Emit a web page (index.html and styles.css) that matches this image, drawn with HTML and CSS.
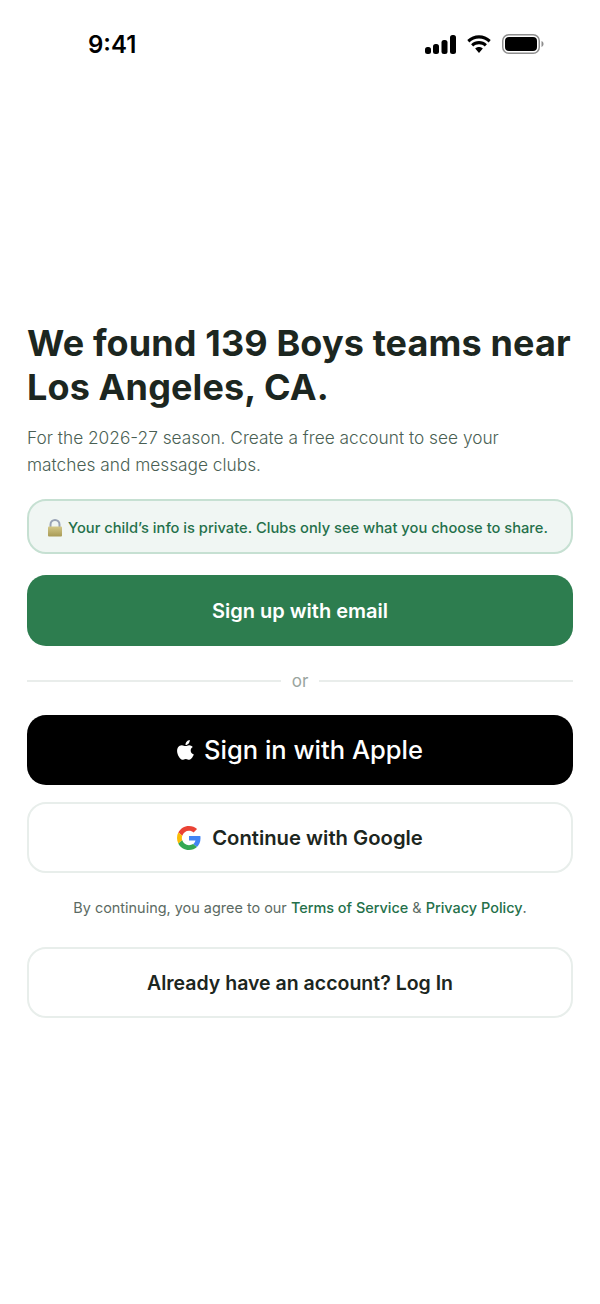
FILE: index.html
```html
<!DOCTYPE html>
<html lang="en">
<head>
<meta charset="utf-8">
<title>Sign up</title>
<link rel="stylesheet" href="styles.css">
</head>
<body>
<div class="status">
  <span class="time">9:41</span>
  <span class="status-icons">
    <svg width="31" height="19" viewBox="0 0 31 19" class="signal"><rect x="0" y="12" width="6" height="7" rx="2.5"/><rect x="8" y="9" width="6" height="10" rx="2.5"/><rect x="16.500" y="5" width="6" height="14" rx="2.5"/><rect x="25" y="0" width="6" height="19" rx="2.500"/></svg>
    <svg width="26" height="19" viewBox="0 0 26 19" class="wifi"><path d="M13 3.500c3.800 0 7 1.400 9.700 3.900l2-2.300C21.400 2 17.400 0.300 13 0.300S4.600 2 1.300 5.100l2 2.300C6 4.900 9.200 3.500 13 3.500z"/><path d="M13 9.300c2.300 0 4.200.8 5.800 2.200l2.100-2.300C18.700 7.200 16 6.100 13 6.100S7.300 7.200 5.100 9.200l2.100 2.300c1.600-1.400 3.500-2.200 5.800-2.200z"/><path d="M13 12c-1.500 0-2.700.5-3.800 1.500L13 18l3.800-4.500c-1.100-1-2.300-1.500-3.800-1.500z"/></svg>
    <svg width="42" height="20" viewBox="0 0 42 20" class="battery"><rect x="0.750" y="0.750" width="36.500" height="18.500" rx="6" fill="none" stroke="#8e8e8e" stroke-width="1.500"/><rect x="3" y="3" width="32" height="14" rx="4"/><path d="M39.500 7v6c1.200-.4 2-1.600 2-3s-.8-2.600-2-3z" fill="#8e8e8e"/></svg>
  </span>
</div>
<main class="content">
  <h1 class="title">We found 139 Boys teams near Los Angeles, CA.</h1>
  <p class="lead">For the 2026-27 season. Create a free account to see your matches and message clubs.</p>
  <div class="notice">
    <svg class="lock" width="16" height="18" viewBox="0 0 16 18"><defs><linearGradient id="lockbody" x1="0" y1="0" x2="0" y2="1"><stop offset="0" stop-color="#d3c888"/><stop offset="1" stop-color="#a89a55"/></linearGradient></defs><path d="M3.500 8V5.500a4.500 4.500 0 0 1 9 0V8" fill="none" stroke="#98a3b5" stroke-width="2"/><rect x="1" y="7.500" width="14" height="10" rx="1" fill="url(#lockbody)"/></svg>
    <span>Your child’s info is private. Clubs only see what you choose to share.</span>
  </div>
  <button class="btn btn-primary">Sign up with email</button>
  <div class="divider"><span class="rule"></span><span class="or">or</span><span class="rule"></span></div>
  <button class="btn btn-apple">
    <svg width="18" height="22" viewBox="0 0 20 24" fill="#fff"><path d="M14.200 1c.1 1.400-.4 2.700-1.200 3.700-.9 1-2.200 1.800-3.500 1.700-.2-1.300.4-2.700 1.200-3.600C11.500 1.800 13 1.100 14.200 1zM18.700 17c-.5 1.200-.8 1.700-1.400 2.700-.9 1.400-2.200 3.100-3.800 3.100-1.400 0-1.800-.9-3.700-.9s-2.400.9-3.800.9c-1.600 0-2.800-1.600-3.700-3C-.2 16-.5 11.600 1 9.300 2.100 7.600 3.800 6.700 5.400 6.700c1.700 0 2.700.9 4.100.9 1.300 0 2.100-.9 4-.9 1.400 0 2.900.8 4 2.100-3.500 1.900-2.900 6.900 1.200 8.200z"/></svg>
    <span>Sign in with Apple</span>
  </button>
  <button class="btn btn-outline btn-google">
    <svg width="24" height="24" viewBox="0 0 48 48"><path fill="#EA4335" d="M24 9.500c3.500 0 6.700 1.200 9.200 3.600l6.900-6.900C35.900 2.400 30.500 0 24 0 14.600 0 6.500 5.400 2.600 13.200l8 6.200C12.400 13.700 17.700 9.500 24 9.500z"/><path fill="#4285F4" d="M47 24.500c0-1.600-.1-3.100-.4-4.500H24v9h12.900c-.6 3-2.200 5.500-4.700 7.200l7.700 6c4.500-4.200 7.100-10.300 7.100-17.700z"/><path fill="#FBBC05" d="M10.500 28.600c-.5-1.400-.8-3-.8-4.600s.3-3.200.8-4.600l-8-6.200C.9 16.500 0 20.100 0 24s.9 7.500 2.600 10.800l7.900-6.200z"/><path fill="#34A853" d="M24 48c6.500 0 11.900-2.100 15.900-5.800l-7.700-6c-2.200 1.500-5 2.300-8.200 2.300-6.300 0-11.600-4.200-13.500-9.900l-7.900 6.200C6.500 42.600 14.600 48 24 48z"/></svg>
    <span>Continue with Google</span>
  </button>
  <p class="terms">By continuing, you agree to our <a class="link" href="#">Terms of Service</a> &amp; <a class="link" href="#">Privacy Policy</a>.</p>
  <button class="btn btn-outline btn-login">Already have an account? Log In</button>
</main>
</body>
</html>
```
FILE: styles.css
```css
* { box-sizing: border-box; }
html, body { margin: 0; height: 100%; }
body {
  background: #fff;
  font-family: Inter, "Noto Sans", sans-serif;
  color: #1c2620;
  overflow: hidden;
}
.status {
  height: 88px;
  padding: 0 56px 0 88px;
  display: flex;
  justify-content: space-between;
  align-items: center;
}
.time { font-size: 24px; font-weight: 600; color: #000; }
.status-icons { display: flex; align-items: center; gap: 10px; }
.content {
  padding: 233px 27px 0;
  display: flex;
  flex-direction: column;
}
.title {
  margin: 0;
  font-size: 36px;
  line-height: 44px;
  font-weight: 700;
  letter-spacing: 0.12px;
}
.lead {
  margin: 15px 0 0;
  max-width: 500px;
  font-size: 17.3px;
  line-height: 27px;
  font-weight: 300;
  color: #4a5f54;
}
.notice {
  margin-top: 21px;
  height: 55px;
  border: 2px solid #c6e0d2;
  border-radius: 19px;
  background: #f0f6f3;
  display: flex;
  align-items: center;
  gap: 5px;
  padding: 2px 18px 0;
  font-size: 14.7px;
  font-weight: 500;
  color: #24704a;
  white-space: nowrap;
}
.btn {
  height: 71px;
  width: 100%;
  border: 0;
  border-radius: 19px;
  font-family: inherit;
  font-size: 20px;
  font-weight: 600;
  display: flex;
  align-items: center;
  justify-content: center;
  gap: 11px;
}
.btn-primary { margin-top: 21px; padding-top: 2px; background: #2d7d4f; color: #fff; }
.divider {
  margin: 25px 0 24px;
  height: 20px;
  display: flex;
  align-items: center;
  gap: 11px;
}
.rule { flex: 1; height: 2px; background: #e9edeb; }
.or { font-size: 17px; color: #9aa5a0; }
.btn-apple { height: 70px; padding-bottom: 2px; background: #000; color: #fff; font-size: 25.5px; font-weight: 500; gap: 9px; }
.btn-outline { background: #fff; color: #1c2620; border: 2px solid #e8eeeb; }
.btn-google { margin-top: 17px; font-size: 20.25px; }
.btn-login { font-size: 19.500px; }
.terms {
  margin: 25px 0 29px;
  font-size: 14.45px;
  line-height: 20px;
  text-align: center;
  color: #5c6b63;
}
.link { color: #24704a; font-weight: 500; text-decoration: none; }
```
